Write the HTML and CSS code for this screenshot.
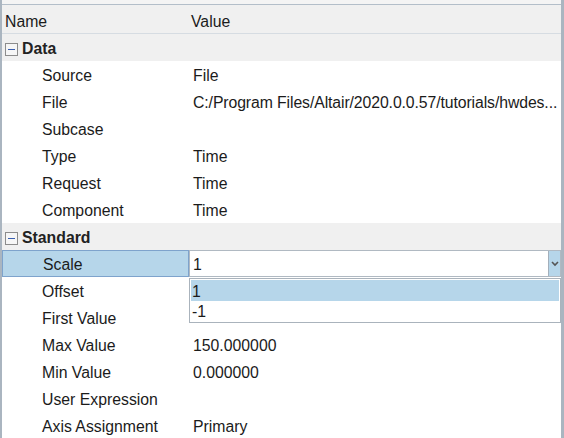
FILE: index.html
```html
<!DOCTYPE html>
<html>
<head>
<meta charset="utf-8">
<link rel="stylesheet" href="styles.css">
</head>
<body>
<div class="panel">
  <div class="topgap"></div>
  <div class="row header">
    <div class="name">Name</div>
    <div class="value">Value</div>
  </div>
  <div class="row group">
    <div class="gname"><span class="toggle"><span class="minus"></span></span>Data</div>
    <div></div>
  </div>
  <div class="row"><div class="name child">Source</div><div class="value">File</div></div>
  <div class="row"><div class="name child">File</div><div class="value path">C:/Program Files/Altair/2020.0.0.57/tutorials/hwdes...</div></div>
  <div class="row"><div class="name child">Subcase</div><div class="value"></div></div>
  <div class="row"><div class="name child">Type</div><div class="value">Time</div></div>
  <div class="row"><div class="name child">Request</div><div class="value">Time</div></div>
  <div class="row"><div class="name child">Component</div><div class="value">Time</div></div>
  <div class="row group">
    <div class="gname"><span class="toggle"><span class="minus"></span></span>Standard</div>
    <div></div>
  </div>
  <div class="row selected">
    <div class="name child sel">Scale</div>
    <div class="editor">
      <span class="etext">1</span>
      <span class="dropbtn">
        <svg width="8" height="6" viewBox="0 0 8 6"><path d="M1 1 L4 4 L7 1" fill="none" stroke="#555" stroke-width="1.6"/></svg>
      </span>
    </div>
    <div class="popup">
      <div class="item hl">1</div>
      <div class="item">-1</div>
    </div>
  </div>
  <div class="row"><div class="name child">Offset</div><div class="value"></div></div>
  <div class="row"><div class="name child">First Value</div><div class="value"></div></div>
  <div class="row"><div class="name child">Max Value</div><div class="value">150.000000</div></div>
  <div class="row"><div class="name child">Min Value</div><div class="value">0.000000</div></div>
  <div class="row"><div class="name child">User Expression</div><div class="value"></div></div>
  <div class="row"><div class="name child">Axis Assignment</div><div class="value">Primary</div></div>
</div>
</body>
</html>
```
FILE: styles.css
```css
html, body {
  margin: 0;
  padding: 0;
  background: #ffffff;
}
.panel {
  width: 564px;
  height: 438px;
  box-sizing: border-box;
  border-left: 2px solid #aab5c0;
  border-right: 3px solid #aab5c0;
  background: #ffffff;
  overflow: hidden;
  font-family: "Liberation Sans", Arial, sans-serif;
  font-size: 15.8px;
  color: #1b1b1b;
}
.topgap {
  height: 4px;
  background: #f4f4f4;
}
.row {
  position: relative;
  display: grid;
  grid-template-columns: 187px 1fr;
  height: 27px;
  box-sizing: border-box;
  padding-top: 3px;
  align-items: center;
}
.header {
  height: 30px;
  padding-top: 5px;
  background: #f0f0f0;
  border-top: 1px solid #b3bec9;
  border-bottom: 1px solid #d6dce2;
}
.group {
  background: #f0f0f0;
}
.name {
  padding-left: 3px;
  white-space: nowrap;
}
.name.child {
  padding-left: 40px;
}
.value {
  padding-left: 4px;
  white-space: nowrap;
  overflow: hidden;
}
.value.path {
  letter-spacing: -0.1px;
}
.header .value {
  padding-left: 2px;
}
.gname {
  display: flex;
  align-items: center;
  font-weight: bold;
  color: #222222;
  padding-left: 3px;
}
.toggle {
  width: 11px;
  height: 11px;
  border: 1px solid #8c8c8c;
  background: #f6f6f6;
  margin-right: 4px;
  display: flex;
  align-items: center;
  justify-content: center;
}
.minus {
  width: 7px;
  height: 1px;
  background: #3a5fb0;
}
.selected {
  align-items: stretch;
  padding-top: 0;
}
.sel {
  background: #b6d6ea;
  border: 1px solid #7ea3cc;
  display: flex;
  align-items: center;
  padding-left: 39px;
  padding-top: 2px;
}
.editor {
  border: 1px solid #b0b9c2;
  display: flex;
  align-items: center;
  background: #ffffff;
}
.etext {
  flex: 1;
  padding-left: 3px;
  padding-top: 2px;
}
.dropbtn {
  width: 11px;
  align-self: stretch;
  background: #b6d6ea;
  border-left: 1px solid #a3afbb;
  display: flex;
  align-items: center;
  justify-content: center;
}
.popup {
  position: absolute;
  left: 187px;
  top: 28px;
  width: 372px;
  height: 45px;
  box-sizing: border-box;
  border: 1px solid #aab3bc;
  background: #ffffff;
  padding: 1px 0 0 1px;
  z-index: 2;
}
.item {
  height: 20px;
  line-height: 22px;
  padding-left: 1px;
}
.item.hl {
  background: #b6d6ea;
  margin-right: 1px;
  height: 21px;
  line-height: 24px;
}
```
